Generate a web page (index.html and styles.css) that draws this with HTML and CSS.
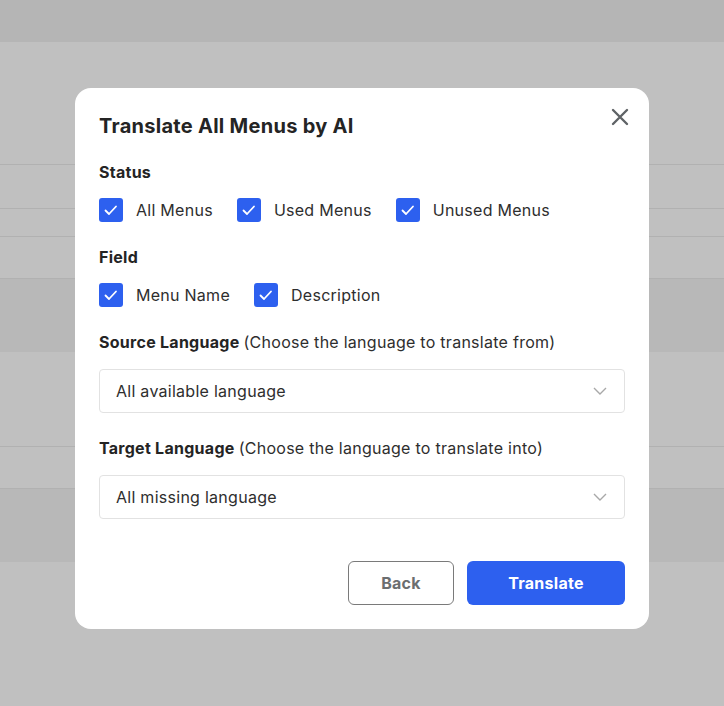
FILE: index.html
```html
<!DOCTYPE html>
<html lang="en">
<head>
  <meta charset="UTF-8">
  <title>Translate All Menus by AI</title>
  <link rel="stylesheet" href="styles.css">
</head>
<body>

  <div class="backdrop">
    <div class="bar"></div>
    <div class="row" style="height: 122px"></div>
    <div class="row line" style="height: 44px"></div>
    <div class="row line" style="height: 28px"></div>
    <div class="row line" style="height: 42px"></div>
    <div class="row line dark" style="height: 74px"></div>
    <div class="row" style="height: 94px"></div>
    <div class="row line" style="height: 42px"></div>
    <div class="row line dark" style="height: 74px"></div>
  </div>

  <div class="modal">
    <button class="close" aria-label="Close">
      <svg width="18" height="18" viewBox="0 0 18 18"><path d="M2 2L16 16M16 2L2 16" stroke="#5f6366" stroke-width="2.4" stroke-linecap="round"/></svg>
    </button>

    <h2 class="title">Translate All Menus by AI</h2>

    <div class="label">Status</div>
    <div class="checks">
      <label class="check"><span class="box"></span>All Menus</label>
      <label class="check"><span class="box"></span>Used Menus</label>
      <label class="check"><span class="box"></span>Unused Menus</label>
    </div>

    <div class="label">Field</div>
    <div class="checks">
      <label class="check"><span class="box"></span>Menu Name</label>
      <label class="check"><span class="box"></span>Description</label>
    </div>

    <div class="label">Source Language <span class="hint">(Choose the language to translate from)</span></div>
    <div class="select">All available language</div>

    <div class="label">Target Language <span class="hint">(Choose the language to translate into)</span></div>
    <div class="select">All missing language</div>

    <div class="actions">
      <button class="btn back">Back</button>
      <button class="btn primary">Translate</button>
    </div>
  </div>

</body>
</html>
```

FILE: styles.css
```css
body {
  margin: 0;
  font-family: Inter, "Noto Sans", sans-serif;
  letter-spacing: 0.27px;
  background-color: #c0c0c0;
  height: 706px;
  overflow: hidden;
  color: #2a2a2a;
}
.backdrop {
  display: flex;
  flex-direction: column;
}
.bar {
  height: 42px;
  background-color: #b5b5b5;
}
.row {
  box-sizing: border-box;
}
.row.line {
  border-top: 1px solid #b1b1b1;
}
.row.dark {
  background-color: #b8b8b8;
}
.modal {
  position: absolute;
  left: 75px;
  top: 88px;
  width: 574px;
  height: 541px;
  box-sizing: border-box;
  padding: 24px;
  background: #fff;
  border-radius: 16px;
  display: flex;
  flex-direction: column;
}
.close {
  position: absolute;
  top: 20px;
  right: 20px;
  width: 18px;
  height: 18px;
  padding: 0;
  border: none;
  background: none;
  cursor: pointer;
}
.close svg {
  display: block;
}
.title {
  margin: 0;
  font-size: 20px;
  line-height: 28px;
  font-weight: 700;
  letter-spacing: 0.28px;
  color: #242424;
}
.label {
  margin-top: 20px;
  font-size: 16px;
  line-height: 24px;
  font-weight: 700;
  color: #242424;
}
.label + .checks {
  margin-top: 14px;
}
.checks + .label {
  margin-top: 23px;
}
.select + .label {
  margin-top: 23px;
}
.hint {
  font-weight: 400;
  color: #2e2e2e;
}
.checks {
  display: flex;
  gap: 24px;
}
.check {
  display: flex;
  align-items: center;
  gap: 13px;
  font-size: 16px;
  line-height: 24px;
  color: #2e2e2e;
}
.box {
  width: 24px;
  height: 24px;
  border-radius: 3px;
  background: #2d60ef url("data:image/svg+xml,%3Csvg xmlns='http://www.w3.org/2000/svg' width='24' height='24'%3E%3Cpath d='M6.5 12.5l3.5 3.5 7-7.5' fill='none' stroke='white' stroke-width='1.8' stroke-linecap='round' stroke-linejoin='round'/%3E%3C/svg%3E") no-repeat center;
}
.select {
  margin-top: 15px;
  height: 44px;
  box-sizing: border-box;
  border: 1px solid #e2e2e2;
  border-radius: 4px;
  padding: 0 16px;
  display: flex;
  align-items: center;
  font-size: 16px;
  color: #2e2e2e;
  background: url("data:image/svg+xml,%3Csvg xmlns='http://www.w3.org/2000/svg' width='14' height='8'%3E%3Cpath d='M1 1l6 6 6-6' fill='none' stroke='%23a8a8a8' stroke-width='1.4'/%3E%3C/svg%3E") no-repeat right 17px center;
}
.actions {
  margin-top: auto;
  display: flex;
  justify-content: flex-end;
  gap: 13px;
}
.btn {
  height: 44px;
  border-radius: 6px;
  font-family: inherit;
  font-size: 16px;
  font-weight: 700;
  letter-spacing: 0.27px;
  cursor: pointer;
}
.btn.back {
  width: 106px;
  border: 1px solid #7a7a7a;
  background: #fff;
  color: #6b6e70;
}
.btn.primary {
  width: 158px;
  border: none;
  background: #2d60ef;
  color: #fff;
}
```
